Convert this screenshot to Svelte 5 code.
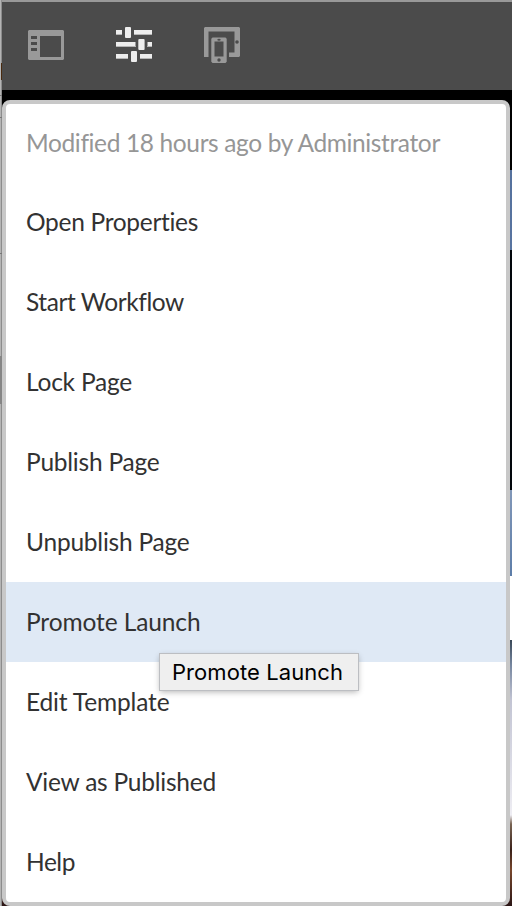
<script>
  const items = [
    { label: 'Open Properties', width: 172.5 },
    { label: 'Start Workflow', width: 158 },
    { label: 'Lock Page', width: 106 },
    { label: 'Publish Page', width: 133.5 },
    { label: 'Unpublish Page', width: 163.5 },
    { label: 'Promote Launch', width: 174.5, active: true },
    { label: 'Edit Template', width: 143.5 },
    { label: 'View as Published', width: 190 },
    { label: 'Help', width: 49 }
  ];

  // Spreads the letters so that a label takes up the given width.
  function fit(node, width) {
    const natural = node.getBoundingClientRect().width;
    node.style.letterSpacing = `${(width - natural) / node.textContent.length}px`;
  }
</script>

<div class="screen">
  <div class="left-edge"></div>
  <main>
    <header>
      <svg width="36" height="30" viewBox="0 0 36 30" fill="#999">
        <path fill-rule="evenodd" d="M1 0H35L36 1V29L35 30H1L0 29V1ZM12 6V27H33V6ZM3 6V9H9V6ZM3 12V15H9V12ZM3 18V21H9V18Z" />
      </svg>
      <svg width="36" height="36" viewBox="0 0 36 36" fill="#ededed">
        <path fill="#b5b5b5" d="M0 7H6V8H0ZM18 7H36V8H18ZM0 19H20V20H0ZM31 19H36V20H31ZM0 31H12V32H0ZM24 31H36V32H24Z" />
        <path d="M0 3H6V7H0ZM18 3H36V7H18ZM0 15H19.5V19H0ZM31.5 15H36V19H31.5ZM0 27H12V31H0ZM24 27H36V31H24Z" />
        <rect x="9" y="0" width="6" height="11" rx="1" />
        <rect x="22.3" y="12" width="6.3" height="11" rx="1" />
        <rect x="15" y="24" width="6" height="11" rx="1" />
      </svg>
      <svg width="36" height="36" viewBox="0 0 36 36" fill="#999">
        <path d="M1 0H35L36 1V29L35 30H25V25.5H30.5V4.5H4.5V30H0V1Z" />
        <path fill-rule="evenodd" d="M8.5 10.5H21.5L22.7 11.7V34.8L21.5 36H8.5L7.3 34.8V11.7ZM10.5 14.5V29.5H19.5V14.5Z" />
        <circle cx="33" cy="15" r="1.8" fill="#4b4b4b" />
        <ellipse cx="15" cy="12.7" rx="1.7" ry="1" fill="#4b4b4b" />
        <circle cx="15" cy="33" r="1.7" fill="#4b4b4b" />
      </svg>
    </header>
    <section class="popover">
      <div class="info"><span use:fit={413.5}>Modified 18 hours ago by Administrator</span></div>
      {#each items as item}
        <div class="item" class:active={item.active}>
          <span use:fit={item.width}>{item.label}</span>
          {#if item.active}
            <div class="tooltip"><span use:fit={171}>Promote Launch</span></div>
          {/if}
        </div>
      {/each}
    </section>
  </main>
</div>

<style>
  .screen {
    display: flex;
    width: 512px;
    height: 906px;
    overflow: hidden;
    font-family: Lato, "Noto Sans", sans-serif;
    font-size: 24.5px;
    color: #323232;
  }
  .left-edge {
    width: 2px;
    flex: none;
    background:
      linear-gradient(#4a2b10, #4a2b10) 1px 63px / 1px 17px no-repeat,
      linear-gradient(#777, #777) 0 95px / 2px 1px no-repeat,
      linear-gradient(#777, #777) 0 117px / 2px 1px no-repeat,
      linear-gradient(#777, #777) 0 253px / 2px 1px no-repeat,
      linear-gradient(#858585, #858585) 0 356px / 2px 48px no-repeat,
      linear-gradient(90deg, #b4b4b4 50%, #8c8c8c 50%);
  }
  main {
    display: flex;
    flex-direction: column;
    flex: 1;
    background: linear-gradient(
      #000 0 170px, #55719d 170px, #5874a0 250px, #02060c 250px 490px,
      #8197b8 490px, #5d7da8 576px, #fff 576px 640px, #394858 640px,
      #76869f 665px, #c2c4d3 700px, #eeedf3 815px, #796454 824px,
      #3a2119 850px, #78472d 870px, #2b1515 906px
    );
  }
  header {
    box-sizing: border-box;
    height: 90px;
    margin-bottom: 10px;
    flex: none;
    display: flex;
    align-items: flex-start;
    gap: 52px;
    padding: 25px 26px;
    border-top: 2px solid #999;
    background: #4b4b4b;
  }
  header svg {
    display: block;
  }
  header svg:first-child {
    margin-top: 3px;
  }
  .popover {
    box-sizing: border-box;
    width: 508px;
    height: 806px;
    border: 4px solid #c8c8c8;
    border-radius: 8px;
    background: #fff;
  }
  .info,
  .item {
    box-sizing: border-box;
    display: flex;
    align-items: center;
    padding-left: 20px;
    height: 80px;
    white-space: nowrap;
  }
  .info {
    height: 78px;
    padding-bottom: 2px;
    color: #969696;
  }
  .item {
    position: relative;
    padding-bottom: 1px;
  }
  .active {
    background: #dfe9f5;
  }
  .tooltip {
    box-sizing: border-box;
    position: absolute;
    z-index: 1;
    left: 154px;
    top: 72px;
    width: 198px;
    height: 36px;
    padding-left: 12px;
    line-height: 36px;
    background: #efefef;
    box-shadow: 0 0 0 1px #bcbec2, 0 2px 6px rgba(0, 0, 0, 0.3);
    color: #000;
    font-family: Inter, sans-serif;
    font-size: 22px;
  }
</style>
